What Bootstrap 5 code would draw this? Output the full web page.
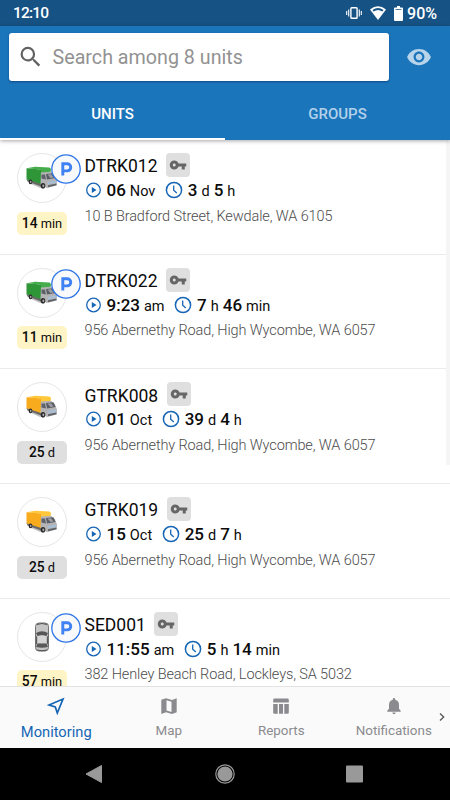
<!DOCTYPE html>
<html lang="en">
<head>
<meta charset="utf-8">
<meta name="viewport" content="width=device-width, initial-scale=1">
<title>Monitoring</title>
<link href="https://cdn.jsdelivr.net/npm/bootstrap@5.3.0/dist/css/bootstrap.min.css" rel="stylesheet">
<style>
body{font-family:Roboto,"Liberation Sans",sans-serif;height:800px;overflow:hidden;background:#fff;color:#0b0b0b;line-height:1}
svg{display:block;flex:none}
.phone{width:450px;height:800px}
.status{height:26px;background:#165284;color:#fff;padding:0 13px}
.status .pct,.status .clock{font:500 16px/27px Roboto,sans-serif}
.status .clock{font-size:15.5px;letter-spacing:-.8px}
.top{height:114px;background:#1b75bb;box-shadow:0 1px 4px rgba(0,0,0,.35);z-index:2}
.search{width:380px;height:48px;margin:7px 0 0 9px;padding-left:9px;border-radius:3px;box-shadow:0 1px 2px rgba(0,30,80,.5);color:#929292;font-size:19.7px}
.search span{margin-left:10.5px;padding-top:2px}
.eye{margin:18px 0 0 17px}
.tabs{height:52px;margin-top:7px;font-size:15px;font-weight:500}
.tabs .tab{border-bottom:2px solid transparent;color:#b2d1ea;padding-top:2px}
.tabs .tab.on{color:#fff;border-color:#fff}
.units{height:546px;overflow:hidden}
.scroll-thumb{right:0;top:0;width:4px;height:325px;background:#f5f5f5}
.unit{height:114.7px;border-bottom:1px solid #ebebeb;padding:13px 0 0 17px}
.side{width:67.5px}
.avatar{width:50px;height:50px;border:1px solid #e6e6e6}
.parked{left:34px;top:1px}
.ago{width:50px;height:23px;margin-top:8.5px;border-radius:5px;background:#fff4c6;font-size:12.8px;padding-top:1px}
.ago b{font-size:13.8px}
.ago.old{background:#dfdfdf}
.ago b,.when b{font-weight:500}
.title-line{height:24px;font-size:17.5px}
.title-line span{padding-top:4px}
.key{width:24px;height:24px;border-radius:4px;background:#dfdfdf;margin-left:8.5px}
.when{height:24px;font-size:14.5px;line-height:24px;margin-top:1px}
.when b{font-size:17px}
.when .txt{margin:0 9.5px 0 5px;padding-top:2px;word-spacing:.4px}
.addr{font-size:14.5px;font-weight:300;letter-spacing:-.12px;line-height:20px;margin-top:4.5px;color:#4c4c4c}
.tabbar{height:62px;background:#fafafa;border-top:1px solid #e2e2e2;color:#8a8a8f;font-size:13.4px}
.tabbar .item{width:112.5px;padding-top:10px}
.tabbar .item span{margin-top:7.5px;line-height:16px}
.tabbar .item.on{color:#1565b5}
.tabbar .item.on span{font-size:14.7px;margin-top:8.5px}
.more{right:4px;top:24px}
.sys{height:52px;background:#000;padding:0 86px 0 83px}
.sys svg:nth-child(2){margin-left:3px}
</style>
</head>
<body>
<svg width="0" height="0" class="position-absolute">
<defs>
<symbol id="truck" viewBox="0 0 32 24">
<path d="M4 17.500 L14 22 L30 18 L30 16 L10 13Z" fill="#777" opacity=".45"/>
<path d="M.5 13 L15 17 L15 20.500 L1.500 15.500Z" fill="#696969"/>
<path d="M.5 2.200 L9 .8 L23.500 1.500 L25 3 L24.500 7 L14.500 8 L14.500 3.500Z" fill="var(--roof)"/>
<path d="M.5 2.200 L15 3.600 L15 18 L.5 13.300Z" fill="var(--box)"/>
<path d="M15 6.500 L25 5.800 L29 9.500 L31 14.500 L30.500 19.500 L21 22 L14.500 18.500Z" fill="#b4b4b6"/>
<path d="M20 8 L27.500 7.300 L29.500 12 L21 13.500Z" fill="#5a5d63"/>
<path d="M21.500 8.600 L25 8.200 L27.500 11.500 L24.500 12Z" fill="#9b9fa5"/>
<path d="M15.500 8.500 L19 8.500 L20 13.500 L15.500 12.500Z" fill="#5f6369"/>
<path d="M22 16 L30.500 14.800 L30.500 16.800 L22 18.300Z" fill="#a6bfd8"/>
<path d="M22 19.200 L30.500 17.600 L30.500 19.200 L22 21.300Z" fill="#5f6368"/>
<ellipse cx="17" cy="19.800" rx="2.300" ry="2.800" fill="#282828"/><ellipse cx="17.300" cy="19.800" rx="1" ry="1.400" fill="#aaa"/>
<ellipse cx="4.500" cy="15.900" rx="1.800" ry="2.300" fill="#282828"/><ellipse cx="4.700" cy="15.900" rx=".8" ry="1.100" fill="#aaa"/>
</symbol>
<symbol id="sedan" viewBox="0 0 16 30">
<rect x="1.500" y="1" width="13" height="28" rx="3.500" fill="#c5c5c5" stroke="#717171"/>
<path d="M3 2.500 Q8 .5 13 2.500" stroke="#555" fill="none"/>
<path d="M2 11 Q8 7.500 14 11 L12.500 14 Q8 12.700 3.500 14Z" fill="#565656"/>
<path d="M3.400 14.200 Q8 13 12.600 14.200 L12.300 21 H3.700Z" fill="#d5d5d5"/>
<path d="M3.400 21.500 H12.600 L14 25 Q8 26.500 2 25Z" fill="#595959"/>
<path d="M2.200 13.500 L3.100 15 V21 L2 23Z M13.800 13.500 L12.900 15 V21 L14 23Z" fill="#505050"/>
<path d="M3 28 Q8 29.500 13 28" stroke="#555" fill="none"/>
</symbol>
<symbol id="keyicon" viewBox="0 0 24 24"><path fill="#666" d="M12.650 10C11.830 7.670 9.610 6 7 6c-3.310 0-6 2.690-6 6s2.690 6 6 6c2.610 0 4.830-1.670 5.650-4H17v4h4v-4h2v-4H12.650zM7 14c-1.100 0-2-.9-2-2s.9-2 2-2 2 .9 2 2-.9 2-2 2z"/></symbol>
<symbol id="play" viewBox="0 0 16 16"><circle cx="8" cy="8" r="6.800" fill="none" stroke="#1765b5" stroke-width="1.300"/><path d="M6.300 5 L11 8 L6.300 11Z" fill="#1765b5"/></symbol>
<symbol id="clock" viewBox="0 0 18 18"><circle cx="9" cy="9" r="7.600" fill="none" stroke="#1765b5" stroke-width="1.500"/><path d="M8.700 4.500 V9.200 L11.800 12" fill="none" stroke="#1765b5" stroke-width="1.300"/></symbol>
<symbol id="park" viewBox="0 0 30 30"><circle cx="15" cy="15" r="14.200" fill="#f8f9fb" stroke="#2c74e6" stroke-width="1.300"/><path d="M11.800 21.500 V9.800 H16.200 a3.550 3.550 0 0 1 0 7.100 H11.800" fill="none" stroke="#3f82f3" stroke-width="2.900"/></symbol>
</defs>
</svg>
<main class="phone d-flex flex-column">
<div class="status d-flex justify-content-between">
<span class="clock">12:10</span>
<div class="d-flex align-items-center">
<svg width="16" height="14" viewBox="0 0 16 14" fill="none" stroke="#fff"><rect x="4.900" y="1.800" width="6.200" height="10.400" rx=".8" stroke-width="1.400"/><path d="M2.700 3.500V10.500M.7 5V9M13.300 3.500V10.500M15.300 5V9" stroke-width="1.100"/></svg>
<svg class="ms-2" width="16" height="14" viewBox="0 0 16 14"><path d="M0 3.500 Q8-2.800 16 3.500 L8 14Z" fill="#fff"/><path d="M2.500 4.100 Q8 .1 13.500 4.100 L12.300 5.600 Q8 2.600 3.700 5.600Z" fill="#165284"/></svg>
<svg class="ms-2" width="9" height="15" viewBox="0 0 9 15"><path d="M3 0h3v1.500h2q1 0 1 1V14q0 1-1 1H1q-1 0-1-1V2.500q0-1 1-1h2Z" fill="#fff"/><path d="M1.500 3.500h6" stroke="#54809f"/></svg>
<span class="pct ms-1">90%</span>
</div>
</div>
<header class="top position-relative">
<div class="d-flex">
<div class="search bg-white d-flex align-items-center"><svg width="24" height="24" viewBox="0 0 24 24" fill="#616161"><path d="M15.500 14h-.79l-.28-.27A6.471 6.471 0 0 0 16 9.500 6.500 6.500 0 1 0 9.500 16c1.610 0 3.090-.59 4.230-1.570l.27.28v.79l5 4.990L20.490 19l-4.990-5zm-6 0C7.010 14 5 11.990 5 9.500S7.010 5 9.500 5 14 7.010 14 9.500 11.990 14 9.500 14z" transform="translate(-.8 -1.500) scale(1.12)"/></svg><span>Search among 8 units</span></div>
<svg class="eye" width="26" height="26" viewBox="0 0 24 24" fill="#b8d4eb"><path d="M12 4.500C7 4.500 2.730 7.610 1 12c1.730 4.390 6 7.500 11 7.500s9.270-3.110 11-7.500c-1.730-4.390-6-7.500-11-7.500zM12 17c-2.760 0-5-2.240-5-5s2.240-5 5-5 5 2.240 5 5-2.240 5-5 5zm0-8c-1.660 0-3 1.340-3 3s1.340 3 3 3 3-1.340 3-3-1.340-3-3-3z"/></svg>
</div>
<nav class="tabs d-flex"><div class="tab on w-50 d-flex align-items-center justify-content-center">UNITS</div><div class="tab w-50 d-flex align-items-center justify-content-center">GROUPS</div></nav>
</header>
<section class="units position-relative">
<div class="scroll-thumb position-absolute"></div>
<article class="unit d-flex" style="--box:#2f9638;--roof:#44ad4a">
<div class="side position-relative"><div class="avatar rounded-circle d-flex align-items-center justify-content-center"><svg width="32" height="24"><use href="#truck"/></svg></div><svg class="parked position-absolute" width="30" height="30"><use href="#park"/></svg><div class="ago d-flex align-items-center justify-content-center"><span><b>14</b> min</span></div></div>
<div><div class="title-line d-flex align-items-center"><span>DTRK012</span><div class="key d-flex align-items-center justify-content-center"><svg width="18" height="18"><use href="#keyicon"/></svg></div></div>
<div class="when d-flex align-items-center"><svg width="17" height="16"><use href="#play"/></svg><span class="txt"><b>06</b> Nov</span><svg width="18" height="18"><use href="#clock"/></svg><span class="txt"><b>3</b> d <b>5</b> h</span></div>
<div class="addr">10 B Bradford Street, Kewdale, WA 6105</div></div>
</article>
<article class="unit d-flex" style="--box:#2f9638;--roof:#44ad4a">
<div class="side position-relative"><div class="avatar rounded-circle d-flex align-items-center justify-content-center"><svg width="32" height="24"><use href="#truck"/></svg></div><svg class="parked position-absolute" width="30" height="30"><use href="#park"/></svg><div class="ago d-flex align-items-center justify-content-center"><span><b>11</b> min</span></div></div>
<div><div class="title-line d-flex align-items-center"><span>DTRK022</span><div class="key d-flex align-items-center justify-content-center"><svg width="18" height="18"><use href="#keyicon"/></svg></div></div>
<div class="when d-flex align-items-center"><svg width="17" height="16"><use href="#play"/></svg><span class="txt"><b>9:23</b> am</span><svg width="18" height="18"><use href="#clock"/></svg><span class="txt"><b>7</b> h <b>46</b> min</span></div>
<div class="addr">956 Abernethy Road, High Wycombe, WA 6057</div></div>
</article>
<article class="unit d-flex" style="--box:#f8ab1c;--roof:#ffc83a">
<div class="side position-relative"><div class="avatar rounded-circle d-flex align-items-center justify-content-center"><svg width="32" height="24"><use href="#truck"/></svg></div><div class="ago old d-flex align-items-center justify-content-center"><span><b>25</b> d</span></div></div>
<div><div class="title-line d-flex align-items-center"><span>GTRK008</span><div class="key d-flex align-items-center justify-content-center"><svg width="18" height="18"><use href="#keyicon"/></svg></div></div>
<div class="when d-flex align-items-center"><svg width="17" height="16"><use href="#play"/></svg><span class="txt"><b>01</b> Oct</span><svg width="18" height="18"><use href="#clock"/></svg><span class="txt"><b>39</b> d <b>4</b> h</span></div>
<div class="addr">956 Abernethy Road, High Wycombe, WA 6057</div></div>
</article>
<article class="unit d-flex" style="--box:#f8ab1c;--roof:#ffc83a">
<div class="side position-relative"><div class="avatar rounded-circle d-flex align-items-center justify-content-center"><svg width="32" height="24"><use href="#truck"/></svg></div><div class="ago old d-flex align-items-center justify-content-center"><span><b>25</b> d</span></div></div>
<div><div class="title-line d-flex align-items-center"><span>GTRK019</span><div class="key d-flex align-items-center justify-content-center"><svg width="18" height="18"><use href="#keyicon"/></svg></div></div>
<div class="when d-flex align-items-center"><svg width="17" height="16"><use href="#play"/></svg><span class="txt"><b>15</b> Oct</span><svg width="18" height="18"><use href="#clock"/></svg><span class="txt"><b>25</b> d <b>7</b> h</span></div>
<div class="addr">956 Abernethy Road, High Wycombe, WA 6057</div></div>
</article>
<article class="unit d-flex">
<div class="side position-relative"><div class="avatar rounded-circle d-flex align-items-center justify-content-center"><svg width="16" height="30"><use href="#sedan"/></svg></div><svg class="parked position-absolute" width="30" height="30"><use href="#park"/></svg><div class="ago d-flex align-items-center justify-content-center"><span><b>57</b> min</span></div></div>
<div><div class="title-line d-flex align-items-center"><span>SED001</span><div class="key d-flex align-items-center justify-content-center"><svg width="18" height="18"><use href="#keyicon"/></svg></div></div>
<div class="when d-flex align-items-center"><svg width="17" height="16"><use href="#play"/></svg><span class="txt"><b>11:55</b> am</span><svg width="18" height="18"><use href="#clock"/></svg><span class="txt"><b>5</b> h <b>14</b> min</span></div>
<div class="addr">382 Henley Beach Road, Lockleys, SA 5032</div></div>
</article>
</section>
<nav class="tabbar d-flex position-relative">
<div class="item on d-flex flex-column align-items-center"><svg width="18" height="18" viewBox="0 0 18 18"><path d="M2 8 L16 2 L10.300 16 L8.300 10Z" fill="none" stroke="currentColor" stroke-width="1.700"/></svg><span>Monitoring</span></div>
<div class="item d-flex flex-column align-items-center"><svg width="18" height="18" viewBox="0 0 18 18"><path d="M1.300 2.800 L6 1.200 L12 3 L16.700 1.200 V15.200 L12 17 L6 15.200 L1.300 17Z" fill="#8a8a8f"/><path d="M6.500 3.200 L11.500 4.700 V15 L6.500 13.500Z" fill="#fafafa"/></svg><span>Map</span></div>
<div class="item d-flex flex-column align-items-center"><svg width="18" height="18" viewBox="0 0 18 18" fill="#8a8a8f"><path d="M2.500 1.500h13q1.300 0 1.300 1.300V5.500H1.200V2.800q0-1.300 1.300-1.300zM1.200 7h4.500v9.700H2.500q-1.300 0-1.300-1.300zM7 7h4v9.700H7zM12.300 7h4.500v8.400q0 1.300-1.300 1.300h-3.200z"/></svg><span>Reports</span></div>
<div class="item d-flex flex-column align-items-center"><svg width="18" height="18" viewBox="0 0 18 18" fill="#8a8a8f"><path d="M7.800 2.700V2q0-1 1.200-1t1.200 1v.7q3.800 1 3.800 5v4l1.700 2v1H2.300v-1l1.700-2v-4q0-4 3.800-5zM7.300 15.500h3.400Q10.500 17.200 9 17.200T7.300 15.500z"/></svg><span>Notifications</span></div>
<svg class="more position-absolute" width="8" height="12" viewBox="0 0 8 12"><path d="M2 2.500 L5.700 6 L2 9.500" fill="none" stroke="#555" stroke-width="1.300"/></svg>
</nav>
<footer class="sys d-flex align-items-center justify-content-between">
<svg width="20" height="20" viewBox="0 0 20 20"><path d="M3 10 L18.500 1.500 V18.500Z" fill="#999" stroke="#999" stroke-linejoin="round"/></svg>
<svg width="20" height="20" viewBox="0 0 20 20"><circle cx="10" cy="10" r="9.200" fill="none" stroke="#999" stroke-width="1.200"/><circle cx="10" cy="10" r="7.600" fill="#999"/></svg>
<svg width="20" height="20" viewBox="0 0 20 20"><rect x="2" y="1.500" width="17" height="17" rx="1" fill="#999"/></svg>
</footer>
</main>
<script src="https://cdn.jsdelivr.net/npm/bootstrap@5.3.0/dist/js/bootstrap.bundle.min.js"></script>
</body>
</html>
